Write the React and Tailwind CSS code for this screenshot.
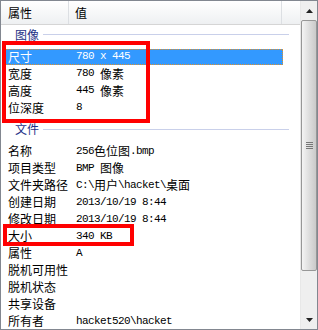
import React from "react";

const imageRows = [
  { label: "尺寸", value: "780 x 445", selected: true },
  { label: "宽度", value: "780 像素" },
  { label: "高度", value: "445 像素" },
  { label: "位深度", value: "8" },
];

const fileRows = [
  { label: "名称", value: "256色位图.bmp" },
  { label: "项目类型", value: "BMP 图像" },
  { label: "文件夹路径", value: "C:\\用户\\hacket\\桌面" },
  { label: "创建日期", value: "2013/10/19 8:44" },
  { label: "修改日期", value: "2013/10/19 8:44" },
  { label: "大小", value: "340 KB" },
  { label: "属性", value: "A" },
  { label: "脱机可用性", value: "" },
  { label: "脱机状态", value: "" },
  { label: "共享设备", value: "" },
  { label: "所有者", value: "hacket520\\hacket" },
];

// split value into CJK / latin runs so latin stays 6px wide like the bitmap font
const Value = ({ text }) => {
  const parts = text.split(/([\u4e00-\u9fff]+)/).filter(Boolean);
  return (
    <span className="whitespace-pre flex items-center">
      {parts.map((p, i) =>
        /[\u4e00-\u9fff]/.test(p) ? (
          <span key={i} className="text-[12px] leading-none font-['Noto_Sans_CJK_SC',sans-serif]">
            {p}
          </span>
        ) : (
          <span
            key={i}
            className="text-[11px] leading-none tracking-[-0.6px] font-['Liberation_Mono','DejaVu_Sans_Mono',monospace]"
          >
            {p}
          </span>
        )
      )}
    </span>
  );
};

const Row = ({ label, value, selected }) => (
  <div className="h-[17px]">
    <div
      className={
        selected
          ? "mt-[1px] ml-[4px] w-[278px] h-[16px] flex items-center border border-dotted border-[#e0902a] bg-[#3399ff] text-white"
          : "mt-[1px] ml-[4px] w-[278px] h-[16px] flex items-center border border-transparent text-black"
      }
    >
      <div className="w-[70px] pl-[2px] shrink-0 text-[12px] leading-none">{label}</div>
      <Value text={value} />
    </div>
  </div>
);

const GroupHeader = ({ title, className }) => (
  <div className={`h-[20px] mb-[3px] flex items-center pl-[14px] mr-[11px] ${className}`}>
    <span className="text-[12px] leading-none text-[#1e3287]">{title}</span>
    <div className="flex-1 ml-[4px] h-px bg-[#c9d0ea]" />
  </div>
);

const Arrow = ({ down }) => (
  <svg width="7" height="4" viewBox="0 0 7 4">
    <path d={down ? "M0 0H7L3.5 4Z" : "M0 4H7L3.5 0Z"} fill="#222" />
  </svg>
);

export default function App() {
  return (
    <div className="relative w-[318px] h-[330px] border border-[#828790] bg-white flex overflow-hidden font-['Noto_Sans_CJK_SC',sans-serif]">
      <div className="w-[299px] flex flex-col">
        <div className="h-[24px] shrink-0 flex border-b border-[#d5d5d5] bg-linear-to-b from-white to-[#eef0f2] text-[12px]">
          <div className="w-[68px] pl-[7px] flex items-center border-r border-[#dcdfe3]">属性</div>
          <div className="w-[213px] pl-[6px] flex items-center border-r border-[#dcdfe3]">值</div>
          <div className="flex-1" />
        </div>

        <GroupHeader title="图像" className="mt-0" />
        {imageRows.map((r) => (
          <Row key={r.label} {...r} />
        ))}

        <GroupHeader title="文件" className="mt-[4px]" />
        {fileRows.map((r) => (
          <Row key={r.label} {...r} />
        ))}
      </div>

      <div className="w-[17px] flex flex-col bg-[#efefef] border-l border-[#e8e8e8]">
        <div className="h-[19px] flex items-center justify-center">
          <Arrow />
        </div>
        <div className="h-[251px] rounded-[2px] border border-[#979797] bg-linear-to-r from-[#f4f4f4] via-[#dedede] to-[#cacaca] flex items-center justify-center">
          <div className="flex flex-col gap-[1px]">
            <div className="w-[7px] h-px bg-[#777]" />
            <div className="w-[7px] h-px bg-[#777]" />
            <div className="w-[7px] h-px bg-[#777]" />
            <div className="w-[7px] h-px bg-[#777]" />
          </div>
        </div>
        <div className="flex-1 flex items-end justify-center pb-[7px]">
          <Arrow down />
        </div>
      </div>

      <div className="absolute left-[1px] top-[40px] w-[148px] h-[82px] border-4 border-[#ff0000]" />
      <div className="absolute left-[2px] top-[223px] w-[131px] h-[22px] border-4 border-[#ff0000]" />
    </div>
  );
}
